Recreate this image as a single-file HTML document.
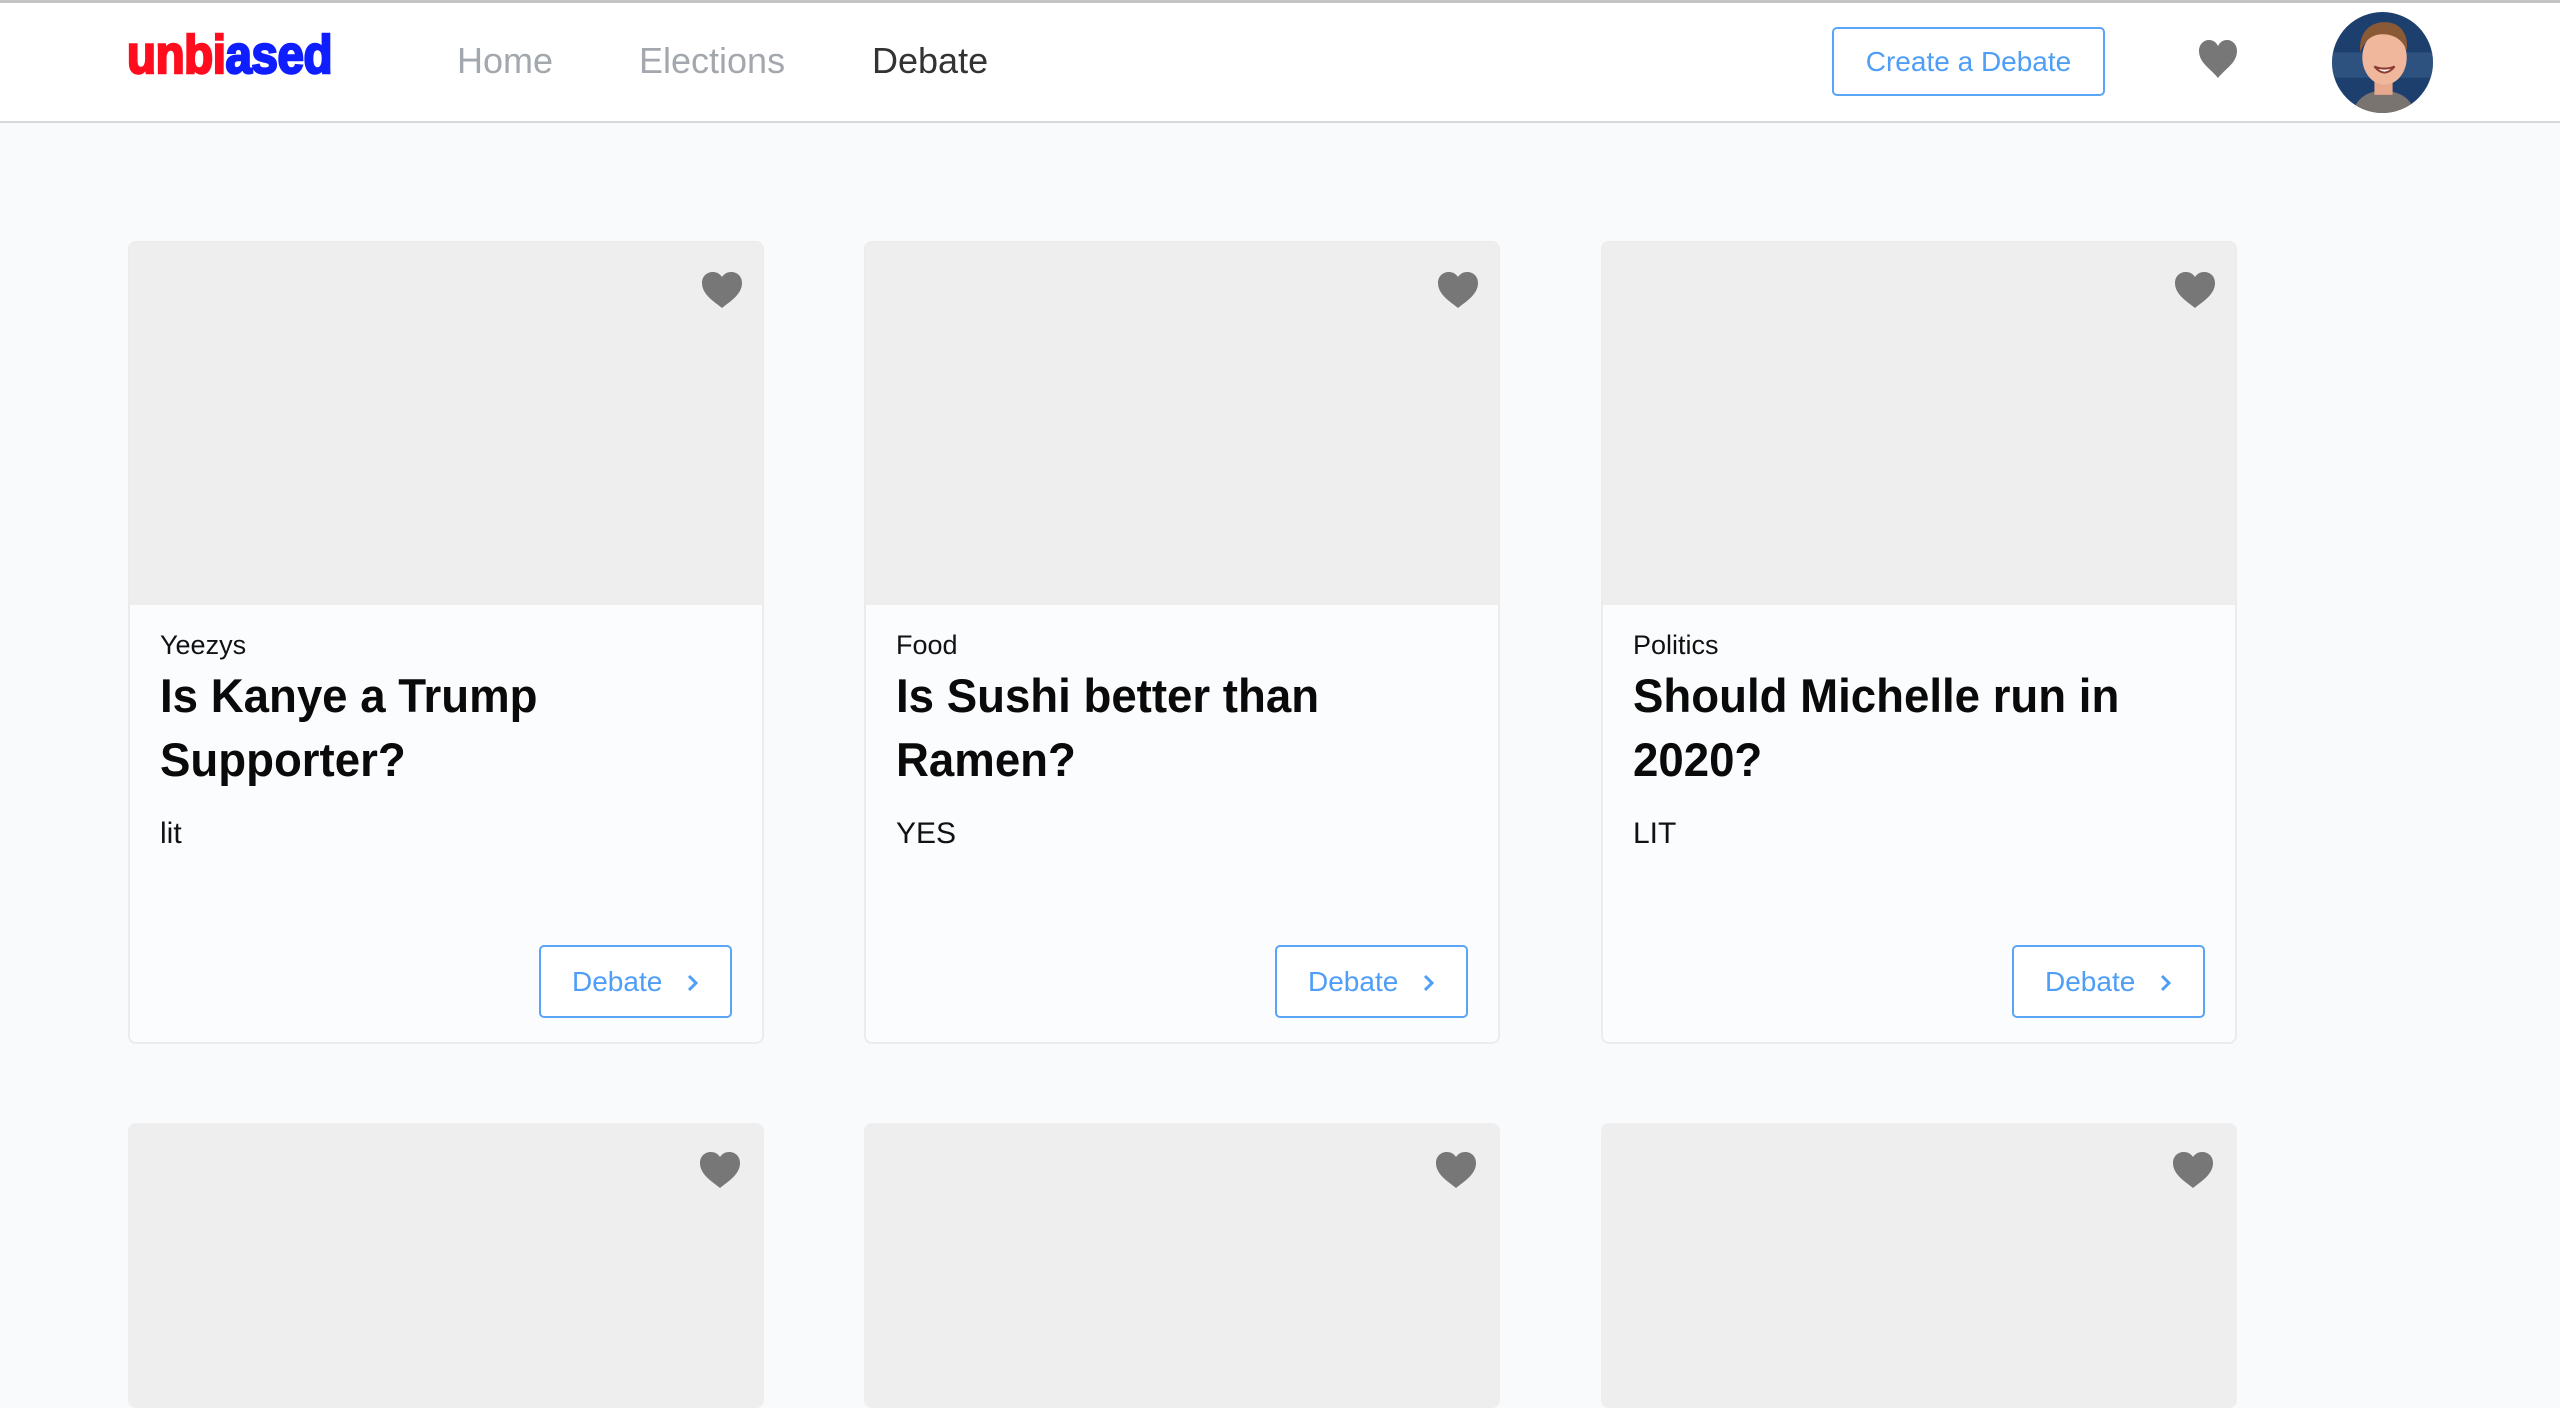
<!DOCTYPE html>
<html><head><meta charset="utf-8"><style>
*{margin:0;padding:0;box-sizing:border-box}
html,body{width:2560px;height:1408px;overflow:hidden}
body{background:#f9fafc;font-family:"Liberation Sans",sans-serif;position:relative}
.hdr{position:absolute;left:0;top:0;width:2560px;height:123px;background:#fff;border-top:3px solid #c4c4c4;border-bottom:2px solid #d8d8d8}
.logo{position:absolute;left:127px;top:22px;font-size:54px;font-weight:bold;letter-spacing:-0.5px;transform:scaleX(0.88);transform-origin:left;line-height:60px;-webkit-text-stroke:2.5px currentColor}
.nav{position:absolute;top:37px;font-size:36px;line-height:42px;color:#a3a8ae}
.cbtn{position:absolute;left:1832px;top:24px;width:273px;height:69px;border:2px solid #5aa5f7;border-radius:5px;color:#4f9ef5;font-size:28px;text-align:center;line-height:65px}
.card{position:absolute;width:636px;height:803px;background:#fbfcfe;border:2px solid #ececec;border-radius:8px;overflow:hidden}
.img{position:absolute;left:0;top:0;width:100%;height:362px;background:#eeeeee}
.heart{position:absolute;left:571px;top:28px;width:42px;height:38px}
.cat{position:absolute;left:30px;top:387px;font-size:27px;color:#111}
.ttl{position:absolute;left:30px;top:421px;font-size:47px;font-weight:bold;line-height:64px;color:#0a0a0a;transform:scaleX(0.97);transform-origin:left;white-space:nowrap}
.desc{position:absolute;left:30px;top:574px;font-size:30px;color:#111}
.dbtn{position:absolute;left:409px;top:702px;width:193px;height:73px;border:2px solid #5aa5f7;border-radius:5px;background:#fff;color:#4f9ef5;font-size:28px;line-height:69px;padding-left:31px}
.dbtn svg{position:absolute;left:145px;top:26px}
</style></head><body>
<div class="hdr">
<div class="logo"><span style="color:#ff0d1e">unbi</span><span style="color:#0f1eff">ased</span></div>
<div class="nav" style="left:457px">Home</div>
<div class="nav" style="left:639px">Elections</div>
<div class="nav" style="left:872px;color:#333">Debate</div>
<div class="cbtn">Create a Debate</div>
<svg style="position:absolute;left:2197px;top:36px" width="42" height="40" viewBox="0 0 42 40"><path d="M21 39 C14 30 2 24 2 12 C2 5 7 1 12 1 C16 1 19 3 21 7 C23 3 26 1 30 1 C35 1 40 5 40 12 C40 24 28 30 21 39Z" fill="#777"/></svg>
<svg style="position:absolute;left:2332px;top:9px" width="101" height="101" viewBox="0 0 100 100">
<defs><clipPath id="c"><circle cx="50" cy="50" r="50"/></clipPath></defs>
<g clip-path="url(#c)">
<rect width="100" height="100" fill="#1d3f6e"/>
<rect x="0" y="40" width="100" height="25" fill="#3a5f8c" opacity=".6"/>
<path d="M20 100 C25 82 40 78 50 78 C62 78 78 82 82 100Z" fill="#7a7470"/>
<rect x="42" y="62" width="18" height="20" fill="#e8a88e"/>
<ellipse cx="52" cy="45" rx="22" ry="27" fill="#f0b79c"/>
<path d="M28 40 C26 20 38 10 52 10 C68 10 76 22 74 38 C70 28 62 22 50 22 C40 22 32 28 28 40Z" fill="#8a5a36"/>
<path d="M42 54 Q52 66 62 54 Q52 58 42 54Z" fill="#fff" stroke="#8c3b30" stroke-width="2"/>
</g></svg>
</div>

<div class="card" style="left:128px;top:241px">
<div class="img"></div>
<svg class="heart" viewBox="0 0 42 38"><path d="M21 37 C14 31 1 24 1 12 C1 5 6 1 12 1 C16 1 19 3 21 6 C23 3 26 1 30 1 C36 1 41 5 41 12 C41 24 28 31 21 37Z" fill="#777"/></svg>
<div class="cat">Yeezys</div>
<div class="ttl">Is Kanye a Trump<br>Supporter?</div>
<div class="desc">lit</div>
<div class="dbtn">Debate<svg width="14" height="20" viewBox="0 0 14 20"><path d="M3 3 L10 10 L3 17" fill="none" stroke="#4f9ef5" stroke-width="3"/></svg></div>
</div>
<div class="card" style="left:864px;top:241px">
<div class="img"></div>
<svg class="heart" viewBox="0 0 42 38"><path d="M21 37 C14 31 1 24 1 12 C1 5 6 1 12 1 C16 1 19 3 21 6 C23 3 26 1 30 1 C36 1 41 5 41 12 C41 24 28 31 21 37Z" fill="#777"/></svg>
<div class="cat">Food</div>
<div class="ttl">Is Sushi better than<br>Ramen?</div>
<div class="desc">YES</div>
<div class="dbtn">Debate<svg width="14" height="20" viewBox="0 0 14 20"><path d="M3 3 L10 10 L3 17" fill="none" stroke="#4f9ef5" stroke-width="3"/></svg></div>
</div>
<div class="card" style="left:1601px;top:241px">
<div class="img"></div>
<svg class="heart" viewBox="0 0 42 38"><path d="M21 37 C14 31 1 24 1 12 C1 5 6 1 12 1 C16 1 19 3 21 6 C23 3 26 1 30 1 C36 1 41 5 41 12 C41 24 28 31 21 37Z" fill="#777"/></svg>
<div class="cat">Politics</div>
<div class="ttl">Should Michelle run in<br>2020?</div>
<div class="desc">LIT</div>
<div class="dbtn">Debate<svg width="14" height="20" viewBox="0 0 14 20"><path d="M3 3 L10 10 L3 17" fill="none" stroke="#4f9ef5" stroke-width="3"/></svg></div>
</div>

<div class="card" style="left:128px;top:1123px;height:285px;border:none;background:#eee"><svg class="heart" viewBox="0 0 42 38"><path d="M21 37 C14 31 1 24 1 12 C1 5 6 1 12 1 C16 1 19 3 21 6 C23 3 26 1 30 1 C36 1 41 5 41 12 C41 24 28 31 21 37Z" fill="#777"/></svg></div>
<div class="card" style="left:864px;top:1123px;height:285px;border:none;background:#eee"><svg class="heart" viewBox="0 0 42 38"><path d="M21 37 C14 31 1 24 1 12 C1 5 6 1 12 1 C16 1 19 3 21 6 C23 3 26 1 30 1 C36 1 41 5 41 12 C41 24 28 31 21 37Z" fill="#777"/></svg></div>
<div class="card" style="left:1601px;top:1123px;height:285px;border:none;background:#eee"><svg class="heart" viewBox="0 0 42 38"><path d="M21 37 C14 31 1 24 1 12 C1 5 6 1 12 1 C16 1 19 3 21 6 C23 3 26 1 30 1 C36 1 41 5 41 12 C41 24 28 31 21 37Z" fill="#777"/></svg></div>
</body></html>
